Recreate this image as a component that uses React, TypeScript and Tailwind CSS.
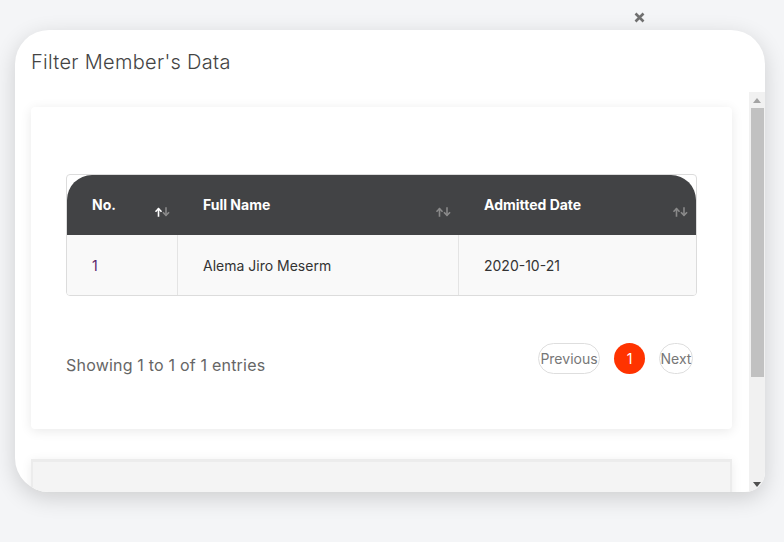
import React from "react";

const font = { fontFamily: "Inter, 'Noto Sans', sans-serif" };

function SortIcon({ active }: { active?: boolean }) {
  return (
    <svg width="15" height="10" viewBox="0 0 15 10" className="shrink-0">
      <g stroke={active ? "#ffffff" : "#8a8a8a"} strokeWidth="1.6" fill="none" strokeLinecap="square">
        <path d="M3.5 9V2" />
        <path d="M1 4.2L3.5 1.6L6 4.2" />
      </g>
      <g stroke="#8a8a8a" strokeWidth="1.6" fill="none" strokeLinecap="square">
        <path d="M11 1V8" />
        <path d="M8.5 5.8L11 8.4L13.5 5.8" />
      </g>
    </svg>
  );
}

const columns = [
  { label: "No.", width: "w-[111px]", active: true },
  { label: "Full Name", width: "w-[281px]" },
  { label: "Admitted Date", width: "flex-1" },
];

export default function App() {
  return (
    <div className="relative h-[542px] w-[784px] overflow-hidden bg-[#f4f5f7]" style={font}>
      {/* close */}
      <div className="absolute left-[634px] top-[12px]">
        <svg width="11" height="11" viewBox="0 0 11 11">
          <path d="M1.5 1.5L9.5 9.5M9.5 1.5L1.5 9.5" stroke="#707070" strokeWidth="2.6" />
        </svg>
      </div>

      <div className="pt-[30px] pl-[15px]">
        <div className="flex h-[462px] w-[750px] flex-col overflow-hidden rounded-[34px] rounded-br-[20px] bg-white shadow-[0_6px_22px_rgba(0,0,0,0.16)]">
          <div className="flex h-[62px] shrink-0 items-center pl-[16px] pt-[1px]">
            <h2 className="text-[20px] font-light tracking-[0.3px] text-[#444]">Filter Member's Data</h2>
          </div>

          <div className="flex min-h-0 flex-1">
            <div className="flex-1 overflow-hidden pl-[16px] pr-[17px] pt-[15px]">
              <div className="rounded-[4px] bg-white px-[35px] pt-[67px] pb-[55px] shadow-[0_2px_12px_rgba(0,0,0,0.09)]">
                <div className="overflow-hidden rounded-[4px] border border-[#dcdcdc]">
                  <div className="flex h-[60px] rounded-t-[25px] bg-[#424345] text-[14px] font-bold text-white">
                    {columns.map((c) => (
                      <div key={c.label} className={`${c.width} flex items-center justify-between pl-[25px] pr-[8px]`}>
                        <span className="-mt-[2px]">{c.label}</span>
                        <span className="mt-[14px]">
                          <SortIcon active={c.active} />
                        </span>
                      </div>
                    ))}
                  </div>
                  <div className="flex h-[60px] bg-[#f9f9f9] text-[14px] text-[#333]">
                    <div className="flex w-[111px] items-center border-r border-[#e4e4e4] pl-[25px] text-[#5b1f6b]">1</div>
                    <div className="flex w-[281px] items-center border-r border-[#e4e4e4] pl-[25px]">Alema Jiro Meserm</div>
                    <div className="flex flex-1 items-center pl-[25px]">2020-10-21</div>
                  </div>
                </div>

                <div className="mt-[47px] flex h-[31px] items-start justify-between">
                  <span className="mt-[14px] text-[16px] leading-[17px] tracking-[0.2px] text-[#666]">Showing 1 to 1 of 1 entries</span>
                  <div className="mr-[4px] flex items-center gap-[14px] text-[14px] text-[#777]">
                    <span className="flex h-[31px] w-[62px] items-center justify-center rounded-full border border-[#dedede]">Previous</span>
                    <span className="flex h-[31px] w-[31px] items-center justify-center rounded-full bg-[#ff3300] text-white">1</span>
                    <span className="flex h-[31px] w-[34px] items-center justify-center rounded-full border border-[#dedede]">Next</span>
                  </div>
                </div>
              </div>

              <div className="mt-[30px] h-[60px] border-2 border-t-[3px] border-[#ececec] bg-[#f4f4f4] shadow-[0_2px_10px_rgba(0,0,0,0.08)]" />
            </div>

            {/* scrollbar */}
            <div className="flex w-[16px] shrink-0 flex-col items-center bg-[#f1f1f1]">
              <div className="flex h-[16px] items-center justify-center">
                <svg width="8" height="5" viewBox="0 0 8 5"><path d="M0 5L4 0L8 5Z" fill="#a3a3a3" /></svg>
              </div>
              <div className="h-[269px] w-[13px] bg-[#c1c1c1]" />
              <div className="flex-1" />
              <div className="flex h-[16px] items-center justify-center">
                <svg width="8" height="5" viewBox="0 0 8 5"><path d="M0 0L8 0L4 5Z" fill="#505050" /></svg>
              </div>
            </div>
          </div>
        </div>
      </div>
    </div>
  );
}
